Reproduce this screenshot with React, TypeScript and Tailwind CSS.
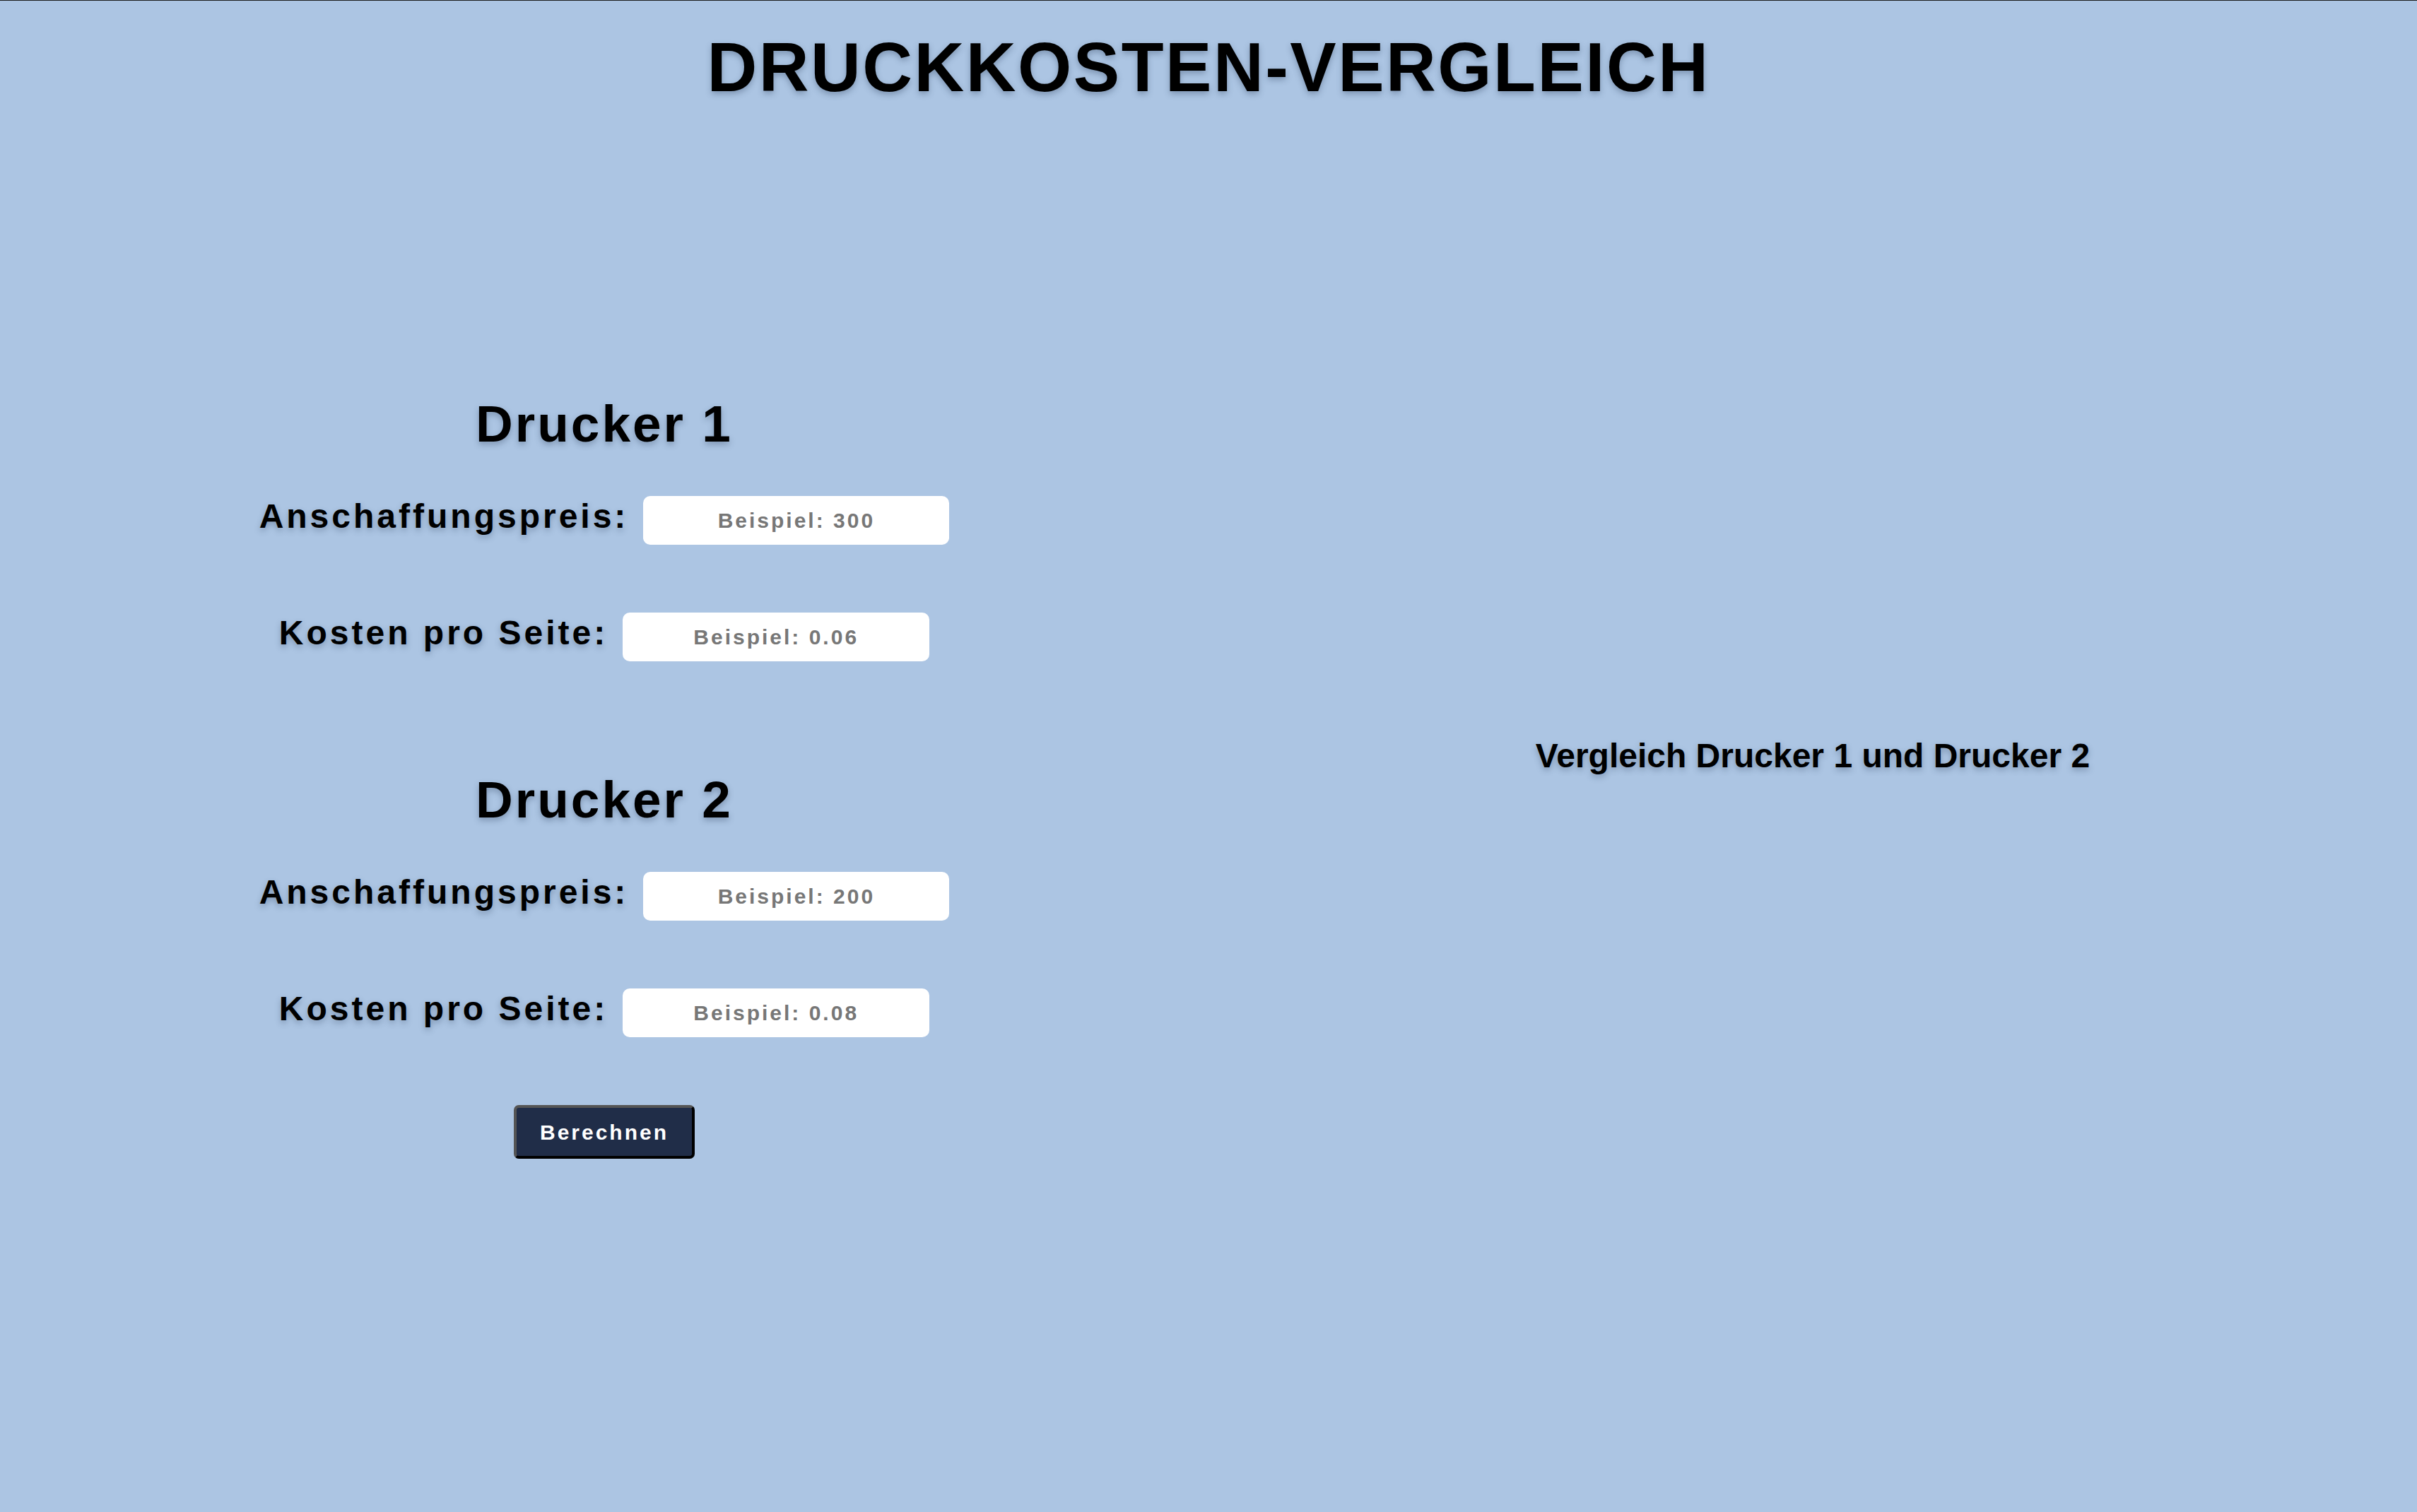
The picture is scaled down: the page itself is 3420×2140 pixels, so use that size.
import React from "react";

const shadow = "[text-shadow:0_4px_8px_rgba(40,60,90,0.35)]";

type FieldProps = {
  label: string;
  placeholder: string;
  width: string;
};

const Field: React.FC<FieldProps> = ({ label, placeholder, width }) => {
  return (
    <div className="flex items-baseline gap-[21px]">
      <label
        className={`text-[48px] leading-none font-bold tracking-[4px] text-black ${shadow}`}
      >
        {label}
      </label>
      <input
        type="text"
        placeholder={placeholder}
        className={`${width} h-[69px] rounded-[10px] bg-white text-center text-[30px] font-bold tracking-[3px] text-[#333] placeholder:text-[#777] outline-none`}
      />
    </div>
  );
};

const Printer: React.FC<{ title: string; price: string; cost: string }> = ({
  title,
  price,
  cost,
}) => {
  return (
    <div className="flex flex-col items-center">
      <h2
        className={`text-[73px] leading-none font-bold tracking-[3px] text-black ${shadow}`}
      >
        {title}
      </h2>
      <div className="mt-[66px] flex flex-col items-center gap-[96px]">
        <Field label="Anschaffungspreis:" placeholder={price} width="w-[433px]" />
        <Field label="Kosten pro Seite:" placeholder={cost} width="w-[434px]" />
      </div>
    </div>
  );
};

export default function App() {
  return (
    <div className="min-h-screen w-full border-t border-[#1c1c1c] bg-[#acc5e3] [font-family:'Liberation_Sans',Arial,sans-serif]">
      {/* Kopfzeile */}
      <header className="flex justify-center pt-[45px]">
        <h1
          className={`text-[98px] leading-none font-bold tracking-[2.5px] text-black ${shadow}`}
        >
          DRUCKKOSTEN-VERGLEICH
        </h1>
      </header>

      <main className="flex w-full">
        {/* Eingaben */}
        <section className="flex w-1/2 flex-col items-center pt-[419px]">
          <Printer title="Drucker 1" price="Beispiel: 300" cost="Beispiel: 0.06" />
          <div className="mt-[159px]">
            <Printer title="Drucker 2" price="Beispiel: 200" cost="Beispiel: 0.08" />
          </div>
          <button className="mt-[96px] h-[76px] w-[256px] rounded-[7px] border-[4px] border-t-[#555] border-l-[#555] border-r-black border-b-black bg-[#202d48] text-[30px] font-bold tracking-[3px] text-white">
            Berechnen
          </button>
        </section>

        {/* Ergebnis */}
        <section className="flex w-1/2 flex-col items-center pt-[902px]">
          <h3 className={`text-[48px] leading-none font-bold text-black ${shadow}`}>
            Vergleich Drucker 1 und Drucker 2
          </h3>
        </section>
      </main>
    </div>
  );
}
